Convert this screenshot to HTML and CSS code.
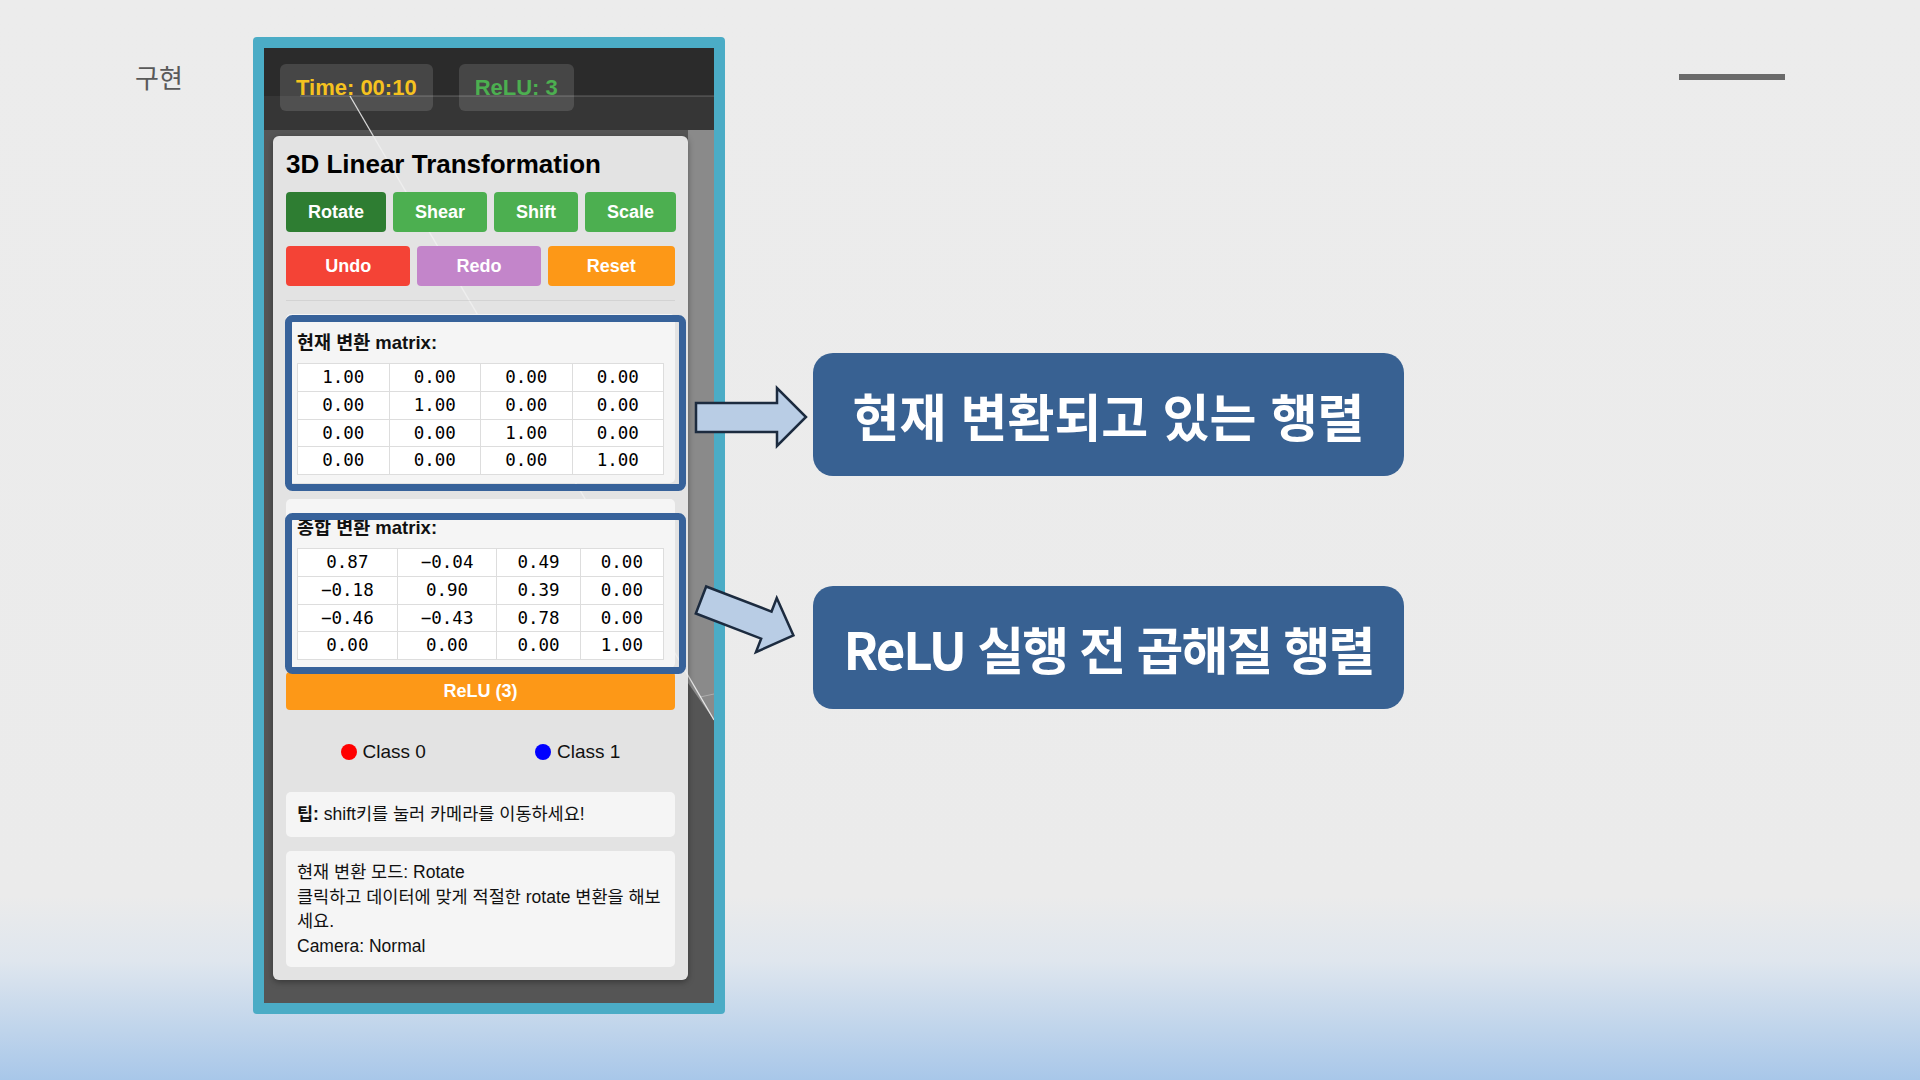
FILE: index.html
```html
<!DOCTYPE html>
<html lang="ko">
<head>
  <meta charset="UTF-8" />
  <meta name="viewport" content="width=device-width, initial-scale=1.0"/>
  <title>구현 - 3D Linear Transformation</title>
  <link rel="stylesheet" href="styles.css">
</head>
<body>
  <div class="slide">
    <div class="slide-title">구현</div>

    <div class="app-frame">
      <div class="app">
        <svg class="scene" width="450" height="955" viewBox="0 0 450 955">
          <rect x="0" y="0" width="450" height="82" fill="#2b2b2b"/>
          <rect x="0" y="48" width="450" height="34" fill="#363636"/>
          <line x1="36" y1="48" x2="450" y2="48" stroke="rgba(255,255,255,0.25)" stroke-width="1"/>
          <polygon points="424,82 450,82 450,672 424,635" fill="#8a8a8a"/>
          <line x1="86" y1="48" x2="450" y2="672" stroke="rgba(255,255,255,0.8)" stroke-width="1.3"/>
          <line x1="436" y1="649" x2="450" y2="646" stroke="rgba(255,255,255,0.3)" stroke-width="1"/>
        </svg>

        <div class="topbar">
          <div class="badge time">Time: 00:10</div>
          <div class="badge relu">ReLU: 3</div>
        </div>

        <div class="panel">
          <h2>3D Linear Transformation</h2>
          <div class="btn-row">
            <button class="btn green active">Rotate</button>
            <button class="btn green">Shear</button>
            <button class="btn green">Shift</button>
            <button class="btn green">Scale</button>
          </div>
          <div class="btn-row second">
            <button class="btn red">Undo</button>
            <button class="btn purple">Redo</button>
            <button class="btn orange">Reset</button>
          </div>
          <div class="divider"></div>

          <div class="matrix-box">
            <h4>현재 변환 matrix:</h4>
            <table class="matrix">
              <tr><td>1.00</td><td>0.00</td><td>0.00</td><td>0.00</td></tr>
              <tr><td>0.00</td><td>1.00</td><td>0.00</td><td>0.00</td></tr>
              <tr><td>0.00</td><td>0.00</td><td>1.00</td><td>0.00</td></tr>
              <tr><td>0.00</td><td>0.00</td><td>0.00</td><td>1.00</td></tr>
            </table>
          </div>

          <div class="matrix-box total">
            <h4>종합 변환 matrix:</h4>
            <table class="matrix">
              <tr><td>0.87</td><td>−0.04</td><td>0.49</td><td>0.00</td></tr>
              <tr><td>−0.18</td><td>0.90</td><td>0.39</td><td>0.00</td></tr>
              <tr><td>−0.46</td><td>−0.43</td><td>0.78</td><td>0.00</td></tr>
              <tr><td>0.00</td><td>0.00</td><td>0.00</td><td>1.00</td></tr>
            </table>
          </div>

          <button class="btn orange relu-btn">ReLU (3)</button>

          <div class="legend">
            <div class="legend-item"><span class="dot red-dot"></span>Class 0</div>
            <div class="legend-item"><span class="dot blue-dot"></span>Class 1</div>
          </div>

          <div class="tip"><b>팁:</b> shift키를 눌러 카메라를 이동하세요!</div>

          <div class="info">
            현재 변환 모드: Rotate<br>
            클릭하고 데이터에 맞게 적절한 rotate 변환을 해보세요.<br>
            Camera: Normal
          </div>
        </div>
      </div>
    </div>

    <div class="callouts">
      <div class="callout">현재 변환되고 있는 행렬</div>
      <div class="callout tight">ReLU 실행 전 곱해질 행렬</div>
    </div>

    <div class="deco-line"></div>

    <!-- slide annotations drawn over the screenshot -->
    <svg class="overlay" width="1920" height="1080" viewBox="0 0 1920 1080">
      <rect x="288.5" y="318.5" width="394" height="169" rx="4" fill="none" stroke="#37629a" stroke-width="7"/>
      <rect x="288.5" y="516.5" width="394" height="154" rx="4" fill="none" stroke="#37629a" stroke-width="7"/>
      <polygon points="696,403 777,403 777,388 806,417 777,446 777,432 696,432" fill="#b9cde5" stroke="#1c2b3f" stroke-width="2.5"/>
      <polygon transform="translate(701,600) rotate(21)" points="0,-14.5 70,-14.5 70,-29 99,0 70,29 70,14.5 0,14.5" fill="#b9cde5" stroke="#1c2b3f" stroke-width="2.5"/>
    </svg>
  </div>
</body>
</html>
```

FILE: styles.css
```css
body { margin: 0; font-family: "Liberation Sans", "Noto Sans CJK KR", sans-serif; }
.slide {
  position: relative;
  width: 1920px;
  height: 1080px;
  box-sizing: border-box;
  padding-top: 37px;
  display: flex;
  align-items: flex-start;
  overflow: hidden;
  background: linear-gradient(180deg, #ececec 0%, #ebebeb 83%, #dfe6ee 89%, #a8c7e9 100%);
}
.slide-title {
  margin: 23px 0 0 135px;
  width: 118px;
  font-family: "Noto Sans CJK KR", sans-serif;
  font-size: 26px;
  line-height: 34px;
  color: #595959;
}
.deco-line {
  margin: 37px 135px 0 auto;
  width: 106px;
  height: 6px;
  background: #6a6a6a;
}

/* screenshot of the app */
.app-frame {
  width: 472px;
  height: 977px;
  box-sizing: border-box;
  border: 11px solid #4bacc6;
  border-radius: 4px;
}
.app {
  position: relative;
  height: 100%;
  overflow: hidden;
  background: #555;
}
.scene { position: absolute; left: 0; top: 0; }
.topbar {
  position: relative;
  height: 82px;
  box-sizing: border-box;
  padding: 16px 0 0 16px;
  display: flex;
  gap: 26px;
}
.badge {
  height: 47px;
  line-height: 47px;
  padding: 0 16px;
  border-radius: 6px;
  background: rgba(255,255,255,0.13);
  font-size: 22px;
  font-weight: bold;
}
.badge.time { color: #f5c21f; }
.badge.relu { color: #4caf50; }

.panel {
  position: relative;
  margin: 6px 26px 0 9px;
  padding: 13px;
  background: rgba(240,240,240,0.92);
  border-radius: 6px;
  box-shadow: 0 2px 6px rgba(0,0,0,0.35);
  color: #111;
}
.panel h2 {
  margin: 0 0 13px;
  font-size: 26px;
  line-height: 30px;
  color: #000;
}
.btn-row { display: flex; gap: 7px; }
.btn-row.second { margin-top: 14px; }
.btn {
  flex: 1 1 auto;
  height: 40px;
  padding: 0 22px;
  border: none;
  border-radius: 4px;
  color: #fff;
  font-family: "Liberation Sans", sans-serif;
  font-size: 18px;
  font-weight: bold;
  cursor: pointer;
}
.btn.green { background: #4caf50; }
.btn.green.active { background: #2e7d32; }
.btn.red { background: #f44336; }
.btn.purple { background: #c385ca; }
.btn.orange { background: #fd9817; }
.divider { height: 1px; margin: 14px 0 13px; background: rgba(0,0,0,0.07); }

.matrix-box {
  padding: 18px 11px 8px;
  background: #f5f5f5;
  border-radius: 5px;
}
.matrix-box.total { margin-top: 16px; }
.matrix-box h4 {
  margin: 0 0 9px;
  font-size: 18.5px;
  line-height: 22px;
}
.matrix {
  width: 100%;
  border-collapse: collapse;
  background: #fff;
}
.matrix td {
  border: 1px solid #ddd;
  padding: 3px 5px;
  line-height: 20.75px;
  text-align: center;
  font-family: "DejaVu Sans Mono", monospace;
  font-size: 17.5px;
  color: #000;
}
.relu-btn { display: block; width: 100%; height: 38px; margin-top: 4px; font-size: 18px; }

.legend {
  display: flex;
  justify-content: space-around;
  margin: 30px 0 28px;
  font-size: 19px;
  line-height: 24px;
}
.legend-item { display: flex; align-items: center; gap: 6px; }
.dot { width: 16px; height: 16px; border-radius: 50%; }
.red-dot { background: #f00; }
.blue-dot { background: #00f; }

.tip, .info {
  background: #f5f5f5;
  border-radius: 5px;
  padding: 10px 11px;
  font-size: 17.5px;
  line-height: 25px;
}
.info {
  margin-top: 14px;
  padding: 9px 11px;
  line-height: 24.5px;
}

/* callouts on the slide */
.callouts {
  margin: 316px 0 0 88px;
  display: flex;
  flex-direction: column;
  gap: 110px;
}
.callout {
  width: 591px;
  height: 123px;
  border-radius: 20px;
  background: #386192;
  display: flex;
  align-items: center;
  justify-content: center;
  white-space: nowrap;
  font-family: "Noto Sans CJK KR", sans-serif;
  font-weight: bold;
  font-size: 51px;
  color: #fff;
}
.callout.tight { letter-spacing: -2px; }
.overlay { position: absolute; left: 0; top: 0; pointer-events: none; }
```
